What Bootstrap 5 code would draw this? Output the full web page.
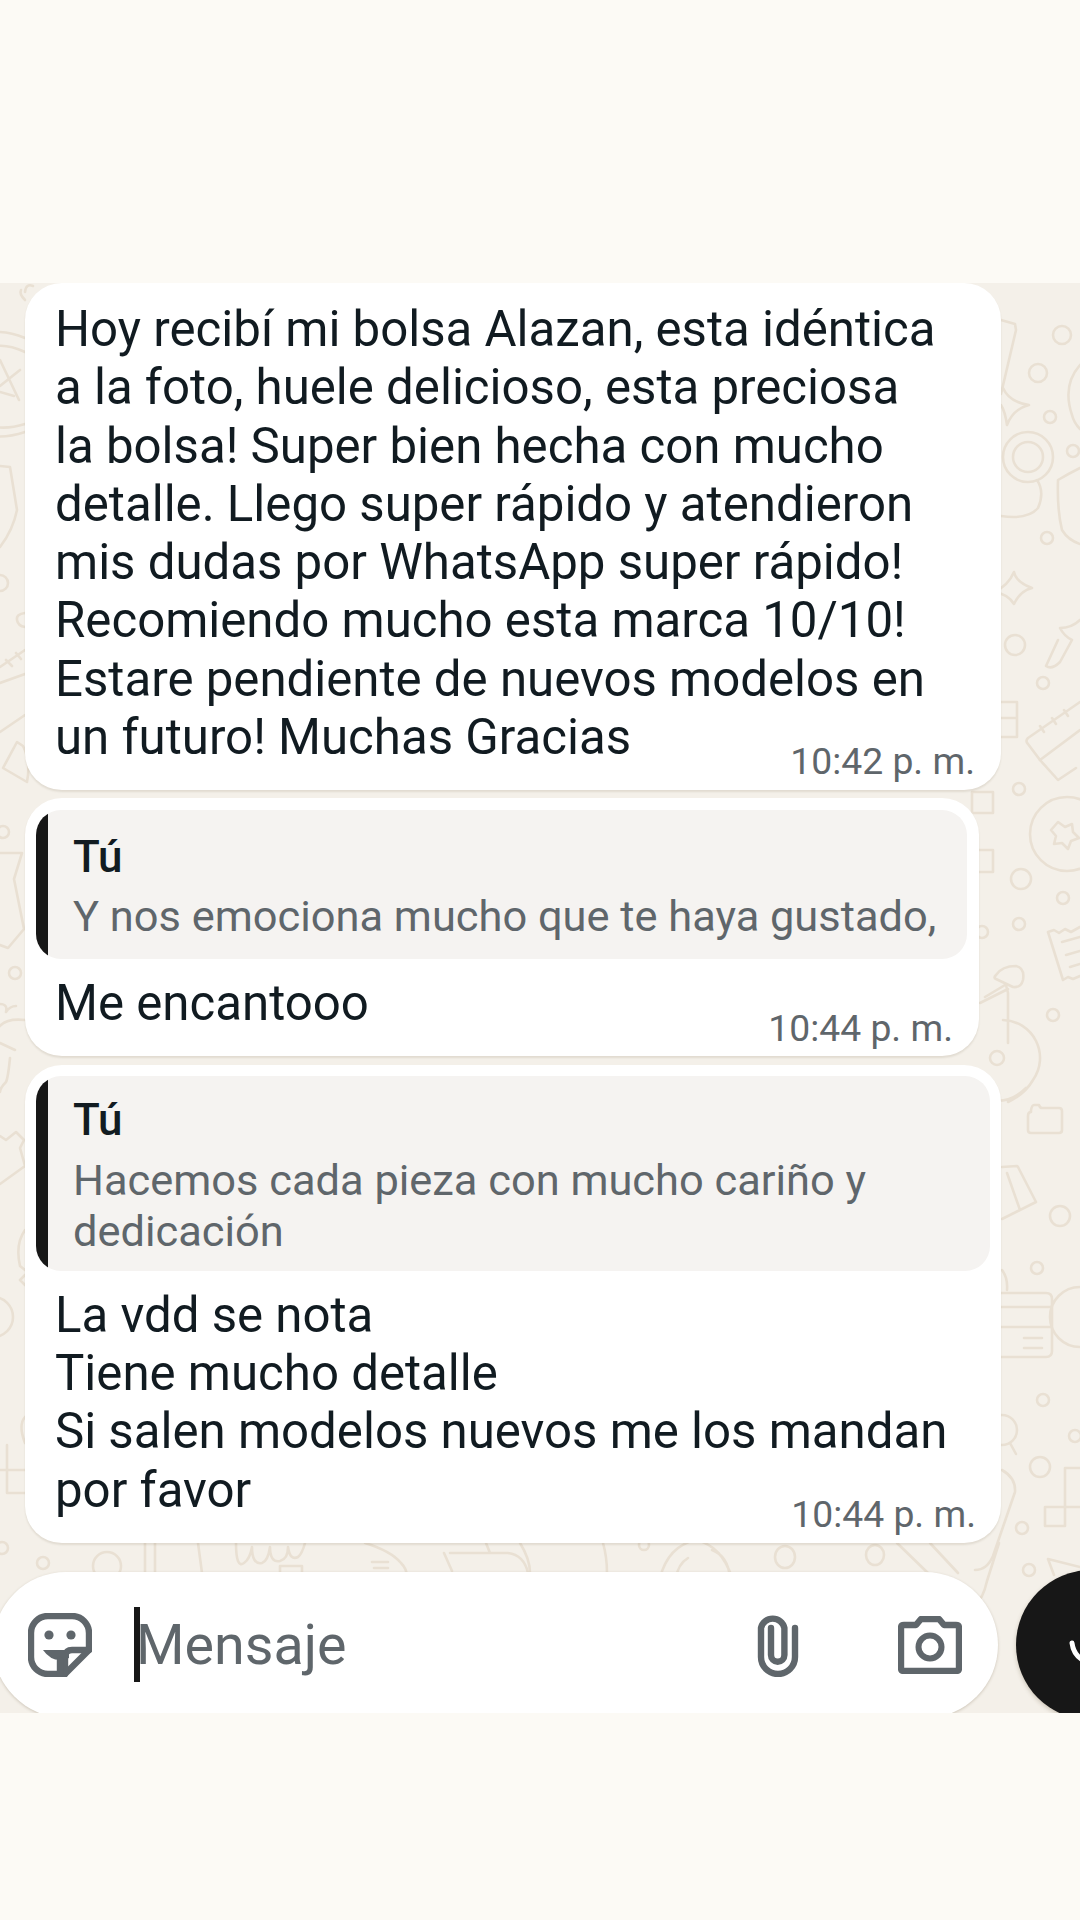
<!DOCTYPE html>
<html lang="es">
<head>
<meta charset="utf-8">
<title>Chat</title>
<link href="https://cdn.jsdelivr.net/npm/bootstrap@5.3.0/dist/css/bootstrap.min.css" rel="stylesheet">
<style>
body{background:#fcfaf5;font-family:Roboto,"Liberation Sans",sans-serif;color:#111b21;height:1920px;overflow:hidden;}
.chat-pane{margin-top:283px;height:1430px;background:#f4f0e9;}
.doodles{inset:0;width:1080px;height:1430px;fill:none;stroke:#e9e0d3;stroke-width:2.6;stroke-linecap:round;stroke-linejoin:round;}
.thread{z-index:1;padding-left:25px;}
.bubble{border-radius:37px;box-shadow:0 2px 2px rgba(90,70,40,.12);}
.b-one{width:976px;padding:17px 26px 24px 30px;margin-bottom:8px;}
.b-two{width:954px;padding:12px 12px 23px 11px;margin-bottom:9px;}
.b-three{width:976px;padding:11px 11px 24px 11px;margin-bottom:29px;}
.msg{font-size:49.2px;line-height:58.3px;white-space:nowrap;}
.inset{padding-left:19px;padding-right:14px;margin-top:15px;}
.stamp{font-size:37.300px;line-height:40px;color:#5f666b;margin-bottom:-15px;white-space:nowrap;}
.quote{background:#f5f3f1;border-radius:25px;}
.quote-bar{width:12px;background:#171717;}
.quote-body{padding-left:25px;padding-right:14px;}
.qb-short{padding-top:22px;padding-bottom:17px;}
.qb-long{padding-top:19px;padding-bottom:13.5px;}
.quote-who{font-size:44px;line-height:50px;font-weight:500;}
.quote-text{font-size:43.4px;line-height:51px;color:#5f666b;white-space:nowrap;}
.qb-short .quote-text{margin-top:9px;}
.qb-long .quote-text{margin-top:10.5px;}
.composer{margin-left:-32px;gap:18px;}
.pill{width:1005px;height:146px;border-radius:73px;padding-left:35px;box-shadow:0 1px 3px rgba(90,70,40,.25);flex:none;}
.send{width:150px;height:150px;background:#171717;flex:none;margin-top:-2px;box-shadow:0 2px 4px rgba(90,70,40,.25);}
.glyph{fill:none;stroke:#5f666b;stroke-width:6.4;stroke-linecap:round;stroke-linejoin:round;}
.hint{font-size:55.6px;line-height:60px;color:#5f666b;margin-left:44px;}
.caret{left:141px;top:35px;width:6px;height:75px;background:#171717;}
.tail-icons{margin-left:auto;}
.clip-icon{margin-right:99px;}
.cam-icon{margin-right:36px;}
</style>
</head>
<body class="m-0">
<div class="chat-pane position-relative overflow-hidden">
  <svg class="doodles position-absolute" viewBox="0 283 1080 1430" aria-hidden="true">
    <!-- right column, upper -->
    <path d="M1001 320l14 4 1 6-15 64"/>
    <circle cx="1062" cy="335" r="9"/><circle cx="1038" cy="373" r="9"/>
    <path d="M1003 388q6 14 26 17q-16 4-22 20q-2-14-6-20"/>
    <circle cx="1050" cy="417" r="6"/>
    <path d="M1080 365q-18 20-8 50q2 8 8 14"/>
    <circle cx="1028" cy="457" r="25"/><circle cx="1028" cy="457" r="15"/>
    <path d="M1037 480q8 12 1 28q-10 12-37 8"/>
    <circle cx="1073" cy="451" r="6"/>
    <path d="M1080 468q-12 6-22 12q-1 30 4 50q6 10 18 14"/>
    <circle cx="1047" cy="538" r="6"/>
    <path d="M1014 572q2 10 18 16q-12 3-18 16q-6-10-20-12q14-6 20-20z"/>
    <path d="M1080 620q-8 8-20 8q4 8 12 12l-12 22q-8 8-14 4l12-26"/>
    <circle cx="1015" cy="645" r="10"/><circle cx="1043" cy="683" r="6"/>
    <path d="M1001 702h16v35h-16M1001 718h16"/>
    <path d="M1080 702l-52 36q-3 3 0 6l12 16M1040 760l40-30M1040 726l4 6M1052 718l4 6M1064 710l4 6"/>
    <!-- right column, middle -->
    <path d="M1040 760l18 20 18-12"/>
    <circle cx="1019" cy="789" r="6"/>
    <rect x="972" y="792" width="21" height="21"/>
    <circle cx="1067" cy="834" r="37"/>
    <path d="M1058 822l7 5 7-3 1 8 6 6-8 3-3 8-6-6-8 1 2-8-5-6z"/>
    <rect x="970" y="850" width="23" height="22"/>
    <circle cx="1021" cy="879" r="10"/><circle cx="1063" cy="898" r="6"/>
    <circle cx="1019" cy="924" r="6"/><circle cx="982" cy="932" r="6"/>
    <path d="M1048 932l6-2 5 3 6-4 6 3 9-5M1048 932l15 48 5-3 5 2 7-3M1062 942l18-5M1066 955l14-4M1070 967l10-3"/>
    <circle cx="1053" cy="1015" r="6"/>
    <path d="M996 975q6-9 20-9 9 2 7 14-2 8-10 7l-17-8q-3-1 0-4z"/>
    <path d="M1005 985l-20 12M1006 985l2 8 0 50M980 1003l28-14"/>
    <circle cx="997" cy="1058" r="7"/>
    <path d="M1003 1020a38 38 0 0 1 30 60q-8 14-25 22M990 1100q20 4 36-12"/>
    <!-- right column, lower -->
    <path d="M1031 1112q-3 0-3 4v14q0 3 3 3h28q3 0 3-3v-19q0-3-3-3h-17q-2 0-3-3h-5q-2 0-3 5z"/>
    <path d="M1002 1167l15-1 1 1 18 35-34 17M1007 1173l13 37"/>
    <circle cx="1060" cy="1216" r="10"/><circle cx="1037" cy="1268" r="6"/>
    <path d="M1002 1270q6 8 5 20M1000 1293h46q6 0 6 6v52q0 6-6 6h-46M1000 1307h52M1000 1327h52M1024 1338h18M1024 1348h18"/>
    <path d="M1080 1287a30 30 0 0 0 0 60"/>
    <circle cx="1043" cy="1400" r="6"/><circle cx="1075" cy="1436" r="6"/>
    <circle cx="1002" cy="1430" r="15"/><path d="M1010 1443l6 11"/>
    <circle cx="1040" cy="1467" r="10"/>
    <path d="M1080 1468h-15v39M1045 1507h35M1045 1507v19h20v-19"/>
    <path d="M1002 1470q14 8 13 22l-22 64q-6 14-18 14"/>
    <circle cx="1022" cy="1528" r="6"/><circle cx="1029" cy="1570" r="6"/>
    <path d="M1048 1559l32 8M1048 1559l6 16"/>
    <!-- gap between last bubble and composer -->
    <circle cx="43" cy="1563" r="6"/>
    <circle cx="107" cy="1566" r="14"/>
    <path d="M145 1543v30M155 1543v30"/>
    <path d="M198 1543l4 30M236 1543q0 26 8 20 6-4 8-16q0 18 10 16 6-2 8-16 0 16 10 14 8-2 8-14 2 14 10 10 4-3 7-14M280 1578v-12h22v12"/>
    <path d="M365 1543q26 8 36 20 6 6 6 14M372 1562h16M374 1568h14"/>
    <path d="M450 1553h58q16 2 20 20M444 1553l8 18M486 1543l4 10M470 1574h36"/>
    <path d="M520 1543q10 16 10 30M603 1543q4 14 4 30"/>
    <circle cx="644" cy="1545" r="5"/>
    <path d="M660 1578q8-32 36-38q26 6 36 38M676 1578q2-14 12-20M712 1550q16 6 18 28"/>
    <ellipse cx="785" cy="1557" rx="10" ry="11"/><ellipse cx="875" cy="1555" rx="9" ry="10"/>
    <path d="M897 1543l64 62q6 4 14 0 8-6 12-24l12-38M930 1543l28 30"/>
    <!-- left column -->
    <path d="M33 286q-7-3-8 6M25 300q-6-6-4-10"/>
    <path d="M25 338q-30-12-50 0a54 54 0 0 0 0 92q20 12 50 2M25 352q-22-10-35-4a40 40 0 0 0 0 78q16 4 35-2"/>
    <path d="M0 360l19 40M0 386l20-16M0 392l14 4"/>
    <path d="M0 466l10 1 7 43q-4 20-17 37"/>
    <circle cx="0" cy="583" r="8"/>
    <path d="M25 613q-9 1-8 7t8 7"/>
    <path d="M0 667l25-17M0 683l25-9M6 660l6 6M16 653l5 6"/>
    <path d="M0 732l25-17"/>
    <path d="M17 742l-14 26 24 14q4-20-4-36z"/>
    <circle cx="3" cy="832" r="6"/>
    <path d="M0 853h22l-8 26 10 50-16 19-8-3"/><circle cx="15" cy="973" r="6"/>
    <path d="M0 1004q8 0 6 8 4-6 10-6M25 1020q-18-2-25 6M0 1043l15 7M10 1058q-2 20-4 24-6 6-6 10"/>
    <path d="M0 1136l6 4 10-8 8 8-4 8 5 18-25 18"/>
    <path d="M25 1230q-10 14-5 36l5 4M25 1285l-5-5 5-5"/>
    <circle cx="-7" cy="1317" r="20"/>
    <path d="M25 1417q-7 8 0 26"/>
    <path d="M7 1445v48h18M0 1470h25"/>
    <circle cx="2" cy="1548" r="6"/>
  </svg>

  <div class="thread position-relative d-flex flex-column">
    <div class="bubble b-one bg-white">
      <div class="msg">Hoy recibí mi bolsa Alazan, esta idéntica<br>a la foto, huele delicioso, esta preciosa<br>la bolsa! Super bien hecha con mucho<br>detalle. Llego super rápido y atendieron<br>mis dudas por WhatsApp super rápido!<br>Recomiendo mucho esta marca 10/10!<br>Estare pendiente de nuevos modelos en</div>
      <div class="d-flex justify-content-between align-items-end">
        <div class="msg">un futuro! Muchas Gracias</div>
        <div class="stamp">10:42 p. m.</div>
      </div>
    </div>

    <div class="bubble b-two bg-white">
      <div class="quote d-flex overflow-hidden">
        <div class="quote-bar flex-shrink-0"></div>
        <div class="quote-body qb-short">
          <div class="quote-who">Tú</div>
          <div class="quote-text">Y nos emociona mucho que te haya gustado,</div>
        </div>
      </div>
      <div class="inset d-flex justify-content-between align-items-end">
        <div class="msg">Me encantooo</div>
        <div class="stamp">10:44 p. m.</div>
      </div>
    </div>

    <div class="bubble b-three bg-white">
      <div class="quote d-flex overflow-hidden">
        <div class="quote-bar flex-shrink-0"></div>
        <div class="quote-body qb-long">
          <div class="quote-who">Tú</div>
          <div class="quote-text">Hacemos cada pieza con mucho cariño y<br>dedicación</div>
        </div>
      </div>
      <div class="inset">
        <div class="msg">La vdd se nota<br>Tiene mucho detalle<br>Si salen modelos nuevos me los mandan</div>
        <div class="d-flex justify-content-between align-items-end">
          <div class="msg">por favor</div>
          <div class="stamp">10:44 p. m.</div>
        </div>
      </div>
    </div>

    <div class="composer d-flex align-items-start">
      <div class="pill bg-white d-flex align-items-center position-relative">
        <svg class="glyph flex-shrink-0" width="64" height="64" viewBox="0 0 64 64" aria-hidden="true">
          <path d="M36 61H20A17 17 0 0 1 3 44V20A17 17 0 0 1 20 3h24a17 17 0 0 1 17 17v17L37 61"/>
          <path d="M61 37H44q-6 0-7 6v18"/>
          <circle cx="21" cy="22" r="4.6" fill="#5f666b" stroke="none"/><circle cx="43" cy="22" r="4.6" fill="#5f666b" stroke="none"/>
          <path d="M15 37h26v8q-4 2-9 2-10 0-17-10z" fill="#5f666b" stroke="none"/>
          <path d="M32 47v14"/>
        </svg>
        <span class="caret position-absolute"></span>
        <span class="hint">Mensaje</span>
        <span class="tail-icons d-flex align-items-center">
          <svg class="glyph clip-icon" width="42" height="64" viewBox="0 0 42 64" aria-hidden="true">
            <path d="M38 15v29a17 17 0 0 1-34 0V15a12 12 0 0 1 23.400 0v27a6.700 6.700 0 0 1-13.400 0V15"/>
          </svg>
          <svg class="glyph cam-icon" width="64" height="58" viewBox="0 0 64 58" aria-hidden="true">
            <path d="M6 9h12l5-6h18l5 6h12q3 0 3 3v40q0 3-3 3H6q-3 0-3-3V12q0-3 3-3z"/>
            <circle cx="32" cy="31" r="11.500" stroke-width="6"/>
          </svg>
        </span>
      </div>
      <div class="send rounded-circle flex-shrink-0">
        <svg width="150" height="150" viewBox="0 0 150 150" aria-hidden="true">
          <path d="M56 73q2 16 19 20q17-4 19-20" fill="none" stroke="#fff" stroke-width="5" stroke-linecap="round"/>
        </svg>
      </div>
    </div>
  </div>
</div>
<script src="https://cdn.jsdelivr.net/npm/bootstrap@5.3.0/dist/js/bootstrap.bundle.min.js"></script>
</body>
</html>
